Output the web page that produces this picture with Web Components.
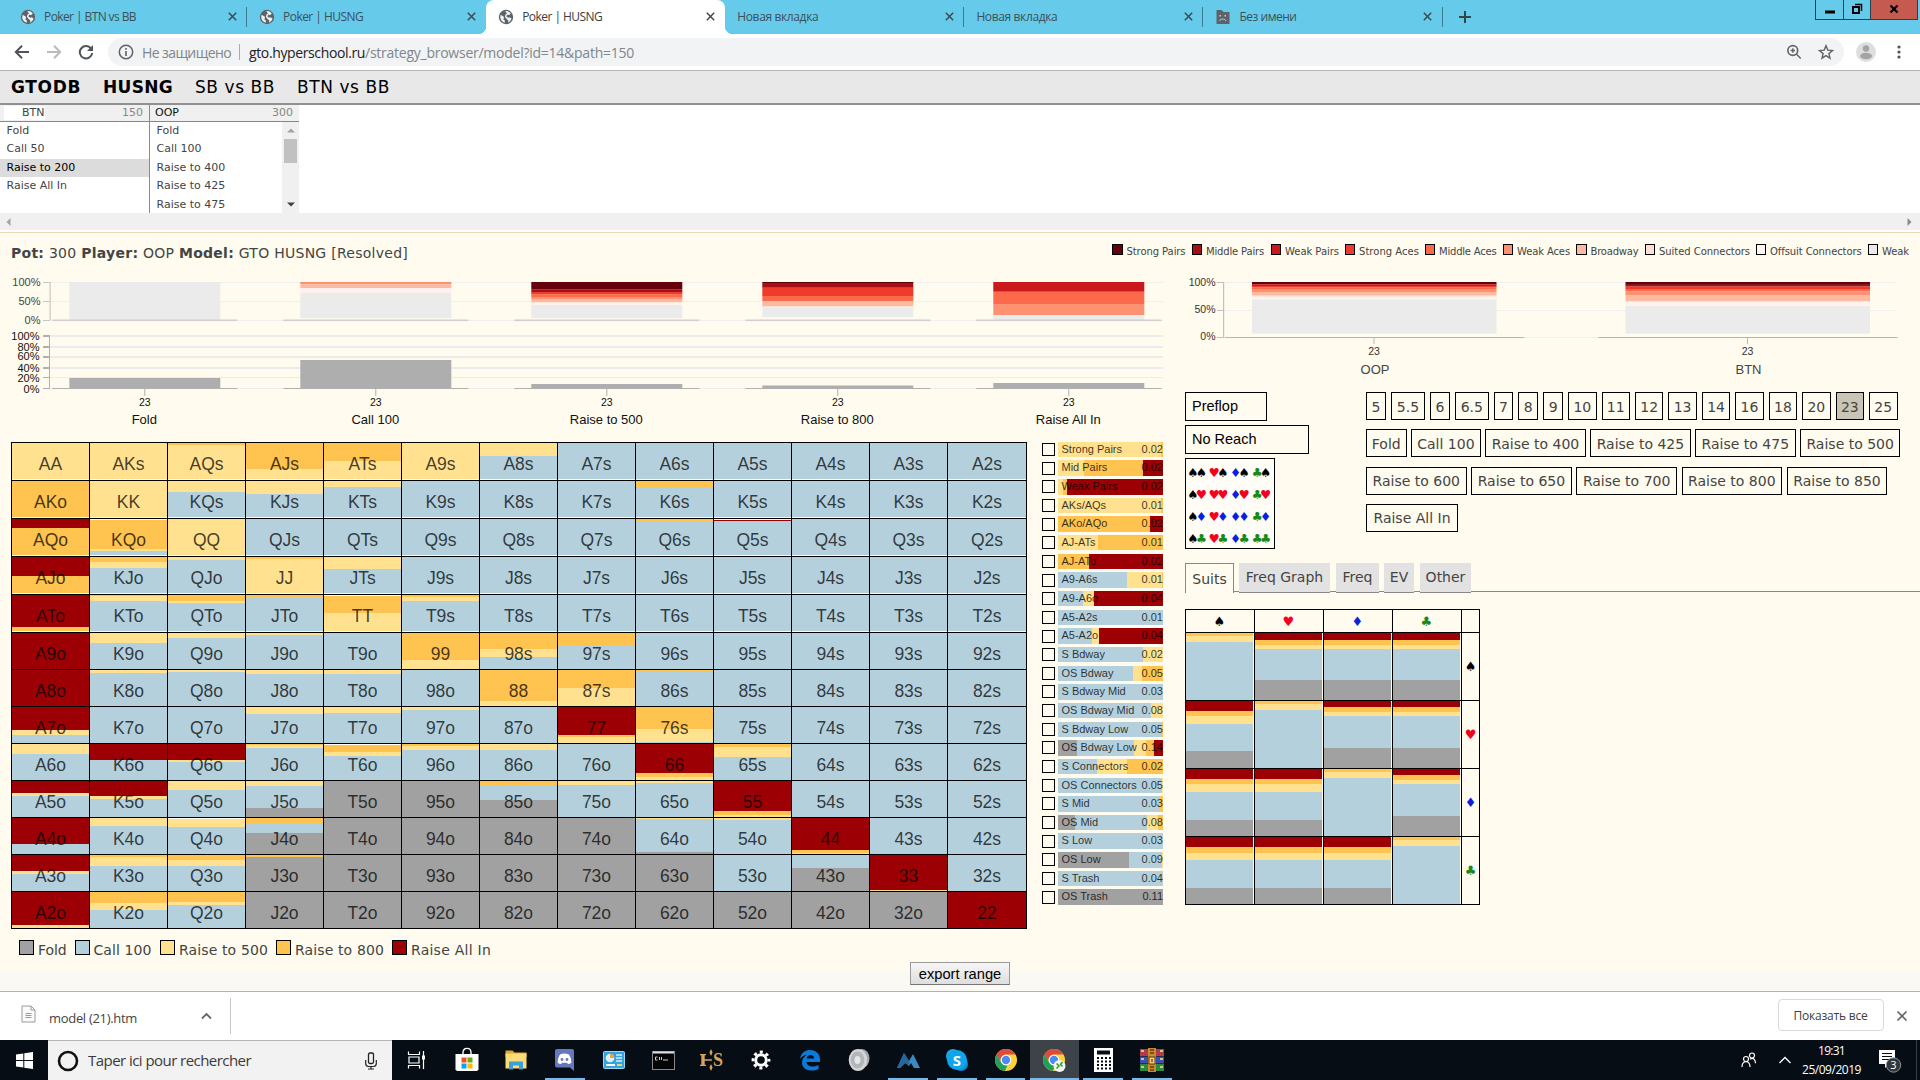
<!DOCTYPE html>
<html lang="ru">
<head>
<meta charset="utf-8">
<title>Poker | HUSNG</title>
<style>
html,body{margin:0;padding:0;width:1920px;height:1080px;overflow:hidden;background:#fff}
body{font-family:"DejaVu Sans",sans-serif;color:#444}
</style>
</head>
<body>
<app-shell></app-shell>
<script>
const define = (name, css, html) => {
  customElements.define(name, class extends HTMLElement {
    connectedCallback() {
      if (this.shadowRoot) return;
      const root = this.attachShadow({mode: 'open'});
      root.innerHTML = `<style>*{box-sizing:border-box}${css}</style>${typeof html === 'function' ? html(this) : html}`;
    }
  });
};
const UI = '"Open Sans","Noto Sans",sans-serif';
const ARIAL = '"Liberation Sans",Arial,sans-serif';
const COL = {r:'#9c0004', o:'#ffc34f', y:'#ffe18f', b:'#b4d0dd', g:'#a1a1a1', w:'#fffbee'};

/* Text set to an exact run width through letter-spacing */
customElements.define('fit-text', class extends HTMLElement {
  connectedCallback() {
    if (this.shadowRoot) return;
    this.attachShadow({mode: 'open'}).innerHTML = '<style>:host{display:inline-block;white-space:pre;flex:none}</style><slot></slot>';
    const w = +this.getAttribute('w');
    const n = this.textContent.length;
    if (w && n) {
      const d = (w - this.getBoundingClientRect().width) / n;
      this.style.letterSpacing = d.toFixed(3) + 'px';
      this.style.width = w + 'px';
    }
  }
});

/* ---------- browser chrome ---------- */
const globe = '<svg width="16" height="16" viewBox="0 0 16 16"><circle cx="8" cy="8" r="7.2" fill="#5f6368"/><path d="M6.200 9.200C6 7 4 7 2.600 5.800L2.200 8.500C2.600 11.500 4.500 13.200 6.800 13.700V11.500L5 10z" fill="#e8f4f8"/><path d="M7.300 2.200C9 1.800 11.500 2.600 12.800 4.600L11 6.200 9.500 5.500 8.300 7.300 9.700 8.600H12L13.500 9.500C13 11.500 11.500 13 10 13.500L10.400 11.400 8.600 9.900 6.900 7.700 7.500 5.600 9 4.500z" fill="#e8f4f8"/></svg>';
const sadTab = '<svg width="16" height="16" viewBox="0 0 16 16"><path d="M1.500 1h5l2 2h6v12h-13z" fill="#5f6368"/><path d="M4.500 6h1.500v1.500H4.500zM9.500 6H11v1.500H9.500z" fill="#9edbf0"/><path d="M4.500 12c1-2.600 5.500-2.600 6.500 0" fill="none" stroke="#9edbf0"/></svg>';
define('browser-tab', `
:host{display:flex;align-items:center;width:239.100px;height:34px;padding:0 9.500px 1px 12px;font:12px ${UI};color:#3d5058;position:relative}
:host([active]){background:#fff;border-radius:8px 8px 0 0;color:#3c4043}
:host([active])::before,:host([active])::after{content:"";position:absolute;bottom:0;width:8px;height:8px;background:radial-gradient(circle at 0 0,transparent 8px,#fff 8.500px)}
:host([active])::before{left:-8px}:host([active])::after{right:-8px;transform:scaleX(-1)}
:host([sep])::after{content:"";position:absolute;right:0;top:7px;width:1px;height:20px;background:#3d7b91}
.i{display:flex;margin-right:8px}.x{margin-left:auto}`,
h => `${h.getAttribute('icon') ? `<span class="i">${h.getAttribute('icon') === 'sad' ? sadTab : globe}</span>` : ''}<fit-text w="${h.getAttribute('w')}">${h.getAttribute('label')}</fit-text><svg class="x" width="11" height="11" viewBox="0 0 11 11"><path d="M1.800 1.800l7.400 7.400M9.200 1.800L1.800 9.200" stroke="#3c4a50" stroke-width="1.500"/></svg>`);

define('tab-strip', `
:host{display:flex;height:34px;background:#66cbeb;padding-left:8px}
.plus{margin:9px 0 0 14px}
.win{margin-left:auto;margin-right:2px;display:flex;height:20px;border:1px solid #2d3d44;border-top:0}
.win span{display:flex;align-items:center;justify-content:center;width:28px;border-right:1px solid #2d3d44;padding-bottom:1px}
.win span:nth-child(2){width:27px}
.win span:last-child{width:46px;border:0;background:#c45a50}`,
`<browser-tab sep icon="g" label="Poker | BTN vs BB" w="92"></browser-tab>
<browser-tab icon="g" label="Poker | HUSNG" w="80"></browser-tab>
<browser-tab active icon="g" label="Poker | HUSNG" w="80"></browser-tab>
<browser-tab sep label="Новая вкладка" w="81"></browser-tab>
<browser-tab sep label="Новая вкладка" w="81"></browser-tab>
<browser-tab sep icon="sad" label="Без имени" w="57"></browser-tab>
<svg class="plus" width="16" height="16"><path d="M8 2v12M2 8h12" stroke="#33444b" stroke-width="2"/></svg>
<div class="win"><span><svg width="12" height="12"><rect x="1" y="7.500" width="10" height="3"/></svg></span><span><svg width="12" height="12" viewBox="0 0 12 12"><path d="M4 1.500h6.500V8" fill="none" stroke="#000" stroke-width="1.500"/><rect x="2" y="4" width="6" height="6" fill="none" stroke="#000" stroke-width="2"/></svg></span><span><svg width="10" height="10"><path d="M1.500 1.500l7 7M8.500 1.500l-7 7" stroke="#000" stroke-width="2.200"/></svg></span></div>`);

define('address-bar', `
:host{display:flex;align-items:center;height:36px;background:#fff;padding:0 12px 0 14px;font:14px ${UI};color:#80868b}
.nav{display:flex;gap:16px;width:94px;align-items:center}
.box{display:flex;align-items:center;width:1736px;height:28px;border-radius:14px;background:#f1f3f4;padding:0 10px}
.sep{width:1px;height:16px;background:#a8acb0;margin:0 9px 0 8px}
.host{color:#202124}.tools{margin-left:auto;display:flex;gap:16px}
.i{margin-right:8px}.av{margin-left:12px}.dots{margin-left:20px}`,
`<div class="nav">
<svg width="16" height="16" viewBox="0 0 16 16"><path d="M15 8H2M8 1.700L1.800 8 8 14.300" fill="none" stroke="#50545a" stroke-width="2"/></svg>
<svg width="16" height="16" viewBox="0 0 16 16"><path d="M1 8h13M8 1.700L14.200 8 8 14.300" fill="none" stroke="#b9bbbe" stroke-width="2"/></svg>
<svg width="16" height="16" viewBox="0 0 16 16"><path d="M13.300 5A6.200 6.200 0 1 0 14.200 9" fill="none" stroke="#50545a" stroke-width="2"/><path d="M15 1v6H9z" fill="#50545a"/></svg></div>
<div class="box"><svg class="i" width="16" height="16" viewBox="0 0 16 16"><circle cx="8" cy="8" r="6.700" fill="none" stroke="#5f6368" stroke-width="1.500"/><path d="M8 7v5M8 4v1.700" stroke="#5f6368" stroke-width="1.600"/></svg>
<fit-text w="89">Не защищено</fit-text><span class="sep"></span><fit-text class="host" w="116">gto.hyperschool.ru</fit-text><fit-text w="269">/strategy_browser/model?id=14&amp;path=150</fit-text>
<span class="tools"><svg width="16" height="16" viewBox="0 0 16 16"><circle cx="6.800" cy="6.500" r="4.900" fill="none" stroke="#5f6368" stroke-width="1.600"/><path d="M10.300 10l4.400 4.500M4.600 6.500h4.400M6.800 4.300v4.400" stroke="#5f6368" stroke-width="1.400"/></svg>
<svg width="16" height="16" viewBox="0 0 16 16"><path d="M8 1.700l1.800 4.400 4.700.4-3.600 3.100 1.100 4.600L8 11.700l-4 2.500 1.100-4.600L1.500 6.500l4.700-.4z" fill="none" stroke="#5f6368" stroke-width="1.400"/></svg></span></div>
<svg class="av" width="20" height="20"><circle cx="10" cy="10" r="10" fill="#dedede"/><circle cx="10" cy="6.500" r="3.200" fill="#a4a4a4"/><ellipse cx="10" cy="14" rx="6" ry="3.300" fill="#a4a4a4"/></svg>
<svg class="dots" width="6" height="16"><circle cx="3" cy="3" r="1.600" fill="#50545a"/><circle cx="3" cy="8" r="1.600" fill="#50545a"/><circle cx="3" cy="13" r="1.600" fill="#50545a"/></svg>`);

/* ---------- page header ---------- */
define('site-nav', `
:host{display:flex;align-items:center;height:35px;background:#e8e8e8;border-top:1px solid #b5b5b5;border-bottom:2px solid #909090;padding:0 0 1px 11px;gap:22px;font-size:17px;color:#000}
b{display:flex}`,
`<b><fit-text w="70">GTODB</fit-text></b><b><fit-text w="70">HUSNG</fit-text></b><fit-text w="80">SB vs BB</fit-text><fit-text w="93">BTN vs BB</fit-text>`);

define('action-column', `
:host{display:block;width:149px;height:108px;font-size:11px;color:#444;overflow:hidden}
:host([ruled]){width:150px;border-right:1px solid #8a8a8a}
.h{display:flex;justify-content:space-between;align-items:center;height:17px;background:#f0f0f0;border-bottom:1px solid #888;padding:0 6px 1px 5px;color:#111}
.h i{font-style:normal;color:#888}
:host([ruled]) .h{padding-left:4px}
:host([ruled]) .h span{background:#fff;color:#444;padding-left:18px;line-height:14px}
.b{display:flex;height:91px}
.l{flex:1}
p{margin:0;height:18.400px;line-height:18.800px;padding-left:6.500px}
p[on]{background:#dcdcdc;color:#000}
.s{width:17px;background:#f0f0f0;padding:6px 2px;display:flex;flex-direction:column;align-items:center}
.s u{width:13px;height:24px;background:#c1c1c1;margin:6px 0 auto}`,
h => { const on = h.getAttribute('on');
 return `<div class="h"><span>${h.getAttribute('name')}</span><i>${h.getAttribute('pot')}</i></div><div class="b"><div class="l">${h.getAttribute('items').split(',').map(t => `<p ${t === on ? 'on' : ''}>${t}</p>`).join('')}</div>${h.hasAttribute('scroll') ? '<div class="s"><svg width="8" height="5"><path d="M0 4.500L4 0.500 8 4.500z" fill="#a3a3a3"/></svg><u></u><svg width="8" height="5"><path d="M0 .5L4 4.500 8 .5z" fill="#404040"/></svg></div>' : ''}</div>`; });

define('history-panel', `
:host{display:block;height:128px;background:#fff;border-bottom:1px solid #ead9b5}
.c{display:flex;height:108px}
.s{display:flex;justify-content:space-between;align-items:center;height:17px;background:#f0f0f0;padding:0 8px 0 6px}`,
`<div class="c"><action-column ruled name="BTN" pot="150" on="Raise to 200" items="Fold,Call 50,Raise to 200,Raise All In"></action-column>
<action-column scroll name="OOP" pot="300" items="Fold,Call 100,Raise to 400,Raise to 425,Raise to 475"></action-column></div>
<div class="s"><svg width="5" height="8"><path d="M4.500 0L.5 4l4 4z" fill="#a3a3a3"/></svg><svg width="5" height="8"><path d="M.5 0l4 4-4 4z" fill="#8a8a8a"/></svg></div>`);

/* ---------- summary ---------- */
const CAT = [['Strong Pairs','#67000d',59,6],['Middle Pairs','#a50f15',58,6.500],['Weak Pairs','#cb181d',54,5.500],['Strong Aces','#ef3b2c',60,5.500],['Middle Aces','#fb6a4a',57.500,6],['Weak Aces','#fc9272',53,6],['Broadway','#fcbba1',48,6],['Suited Connectors','#fee0d2',91,5.500],['Offsuit Connectors','#fff5f0',91.500,6],['Weak','#ebebeb',27,0]];
define('summary-bar', `
:host{display:flex;justify-content:space-between;height:39px;padding:0 11px;color:#444}
.t{font-size:14px;line-height:40px}
.l{display:flex;font-size:10px;padding-top:11px;line-height:15px}
.l i{width:10.500px;height:11px;border:1px solid #000;margin-right:4px}`,
`<div class="t"><fit-text w="397"><b>Pot:</b> 300 <b>Player:</b> OOP <b>Model:</b> GTO HUSNG [Resolved]</fit-text></div>
<div class="l">${CAT.map(c => `<i style="background:${c[1]}"></i><fit-text w="${c[2]}" style="margin-right:${c[3]}px">${c[0]}</fit-text>`).join('')}</div>`);

/* ---------- charts; y coordinates are relative to the chart top ---------- */
const rect = (x, y, w, h, f) => `<rect x="${x}" y="${y}" width="${w}" height="${h}" fill="${f}"/>`;
const label = (x, y, t, a, s, f) => `<text x="${x}" y="${y}" text-anchor="${a}" font-size="${s}" fill="${f || '#111'}">${t}</text>`;
const bands = (x, w, y0, list) => list.map(([f, y1]) => { const r = rect(x, y0, w, y1 - y0 + .1, f); y0 = y1; return r; }).join('');
const G = '#ebebeb', P = CAT.map(c => c[1]);
define('action-chart', `:host{display:block;height:170px}svg{display:block;font-family:${ARIAL}}`, () => {
  let s = '';
  [[10,1],[29,1],[48,1]].forEach(([y]) => s += rect(50, y, 1113, 1, '#efeff0'));
  [[63,2],[74,2],[84,2],[95,2],[105,1],[116,1]].forEach(([y, h]) => { s += rect(50, y, 1113, h, '#ececec'); s += rect(43, y, 7, h, '#b0b0b0'); });
  [['100%',14],['50%',33],['0%',51.500]].forEach(([t, y]) => s += label(40.500, y, t, 'end', 11, '#444'));
  [['100%',68],['80%',79],['60%',88],['40%',100],['20%',109.500],['0%',120.500]].forEach(([t, y]) => s += label(39.500, y, t, 'end', 11));
  [10,29,48].forEach(y => s += rect(43, y, 7, 1, '#c8c8c4'));
  s += rect(49.500, 10, 1.200, 38, '#c8c8c4') + rect(49, 63, 1, 54, '#b0b0b0');
  const stacks = [
    [[G,48]],
    [[P[5],12.300],[P[6],16],['#fff1ed',21],[G,46]],
    [[P[0],17.500],[P[1],20],[P[3],22.500],[P[4],25],[P[5],27],[P[6],30.500],['#fff1ed',33],[G,46]],
    [[P[0],11],[P[1],15.700],[P[3],24],[P[4],29],[P[6],34.500],['#f6efe9',36],[G,45]],
    [[P[2],19.700],[P[4],32],[P[5],43],[G,48]]];
  const tops = [106,88,112,113.500,111], names = ['Fold','Call 100','Raise to 500','Raise to 800','Raise All In'];
  stacks.forEach((b, i) => {
    const x = 69.300 + 231 * i;
    s += bands(x, 151, 10, b) + rect(x, tops[i], 151, 116 - tops[i], '#aeaeae');
    s += rect(x - 17, 47.500, 185, 1.600, '#d0d0cc') + rect(x - 17, 116, 185, 1, '#b0b0b0') + rect(x + 75, 117, 1, 7, '#b0b0b0');
    s += label(x + 75.500, 134, '23', 'middle', 10.500) + label(x + 75, 151.500, names[i], 'middle', 13);
  });
  return `<svg width="1175" height="170">${s}</svg>`;
});
define('reach-chart', `:host{display:block;height:120px}svg{display:block;font-family:${ARIAL}}`, () => {
  let s = '';
  [[10,'100%'],[38,'50%'],[65,'0%']].forEach(([y, t]) => s += rect(39, y, 673, 1, '#efeff0') + rect(32, y, 7, 1, '#c0c0bc') + label(30.500, y + (y > 20 ? 3 : 3.500), t, 'end', 10.500, '#333'));
  s += rect(38, 10, 1.200, 56, '#c0c0bc');
  [['OOP',67,[[P[0],12.300],[P[2],14],[P[3],15.500],[P[4],17],[P[5],20.500],[P[6],23.700],['#fee8de',25],[P[8],27.500],[G,61.500]]],
   ['BTN',440.500,[[P[0],12.800],[P[1],14.500],[P[3],17],[P[4],19.500],[P[5],23],[P[6],29.500],['#fff1ed',34],[G,61.500]]]].forEach(([n, x, b]) => {
    s += bands(x, 244.500, 10, b) + rect(x - 27, 65, 299, 1, '#b4b4b2') + rect(x + 121.500, 66, 1, 6, '#b8b8b4');
    s += label(x + 122, 83, '23', 'middle', 10.500, '#333') + label(x + 123, 101.700, n, 'middle', 13, '#444');
  });
  return `<svg width="735" height="120">${s}</svg>`;
});

/* ---------- range matrix ---------- */
const gradient = (spec, dir, unit) => {
  const parts = spec.match(/[a-z][\d.]*/g); let at = 0;
  return `linear-gradient(${dir},${parts.map(p => { const c = COL[p[0]], e = p.slice(1); const a = at; at = e || null; return e ? `${c} ${a}${unit},${c} ${e}${unit}` : `${c} ${a}${unit}`; }).join(',')}${parts.length === 1 ? `,${COL[parts[0][0]]}` : ''})`;
};
const RANGE = [
 'y y o2y o26y o18.5y y y13b b b b b b b',
 'o y y11b y13b y5.5b b b b o6.5b b b b b',
 'r9o w1o30.5y32.5b y b b b b b o3b w1r2b b b b',
 'r18.5o o4.5y11b y3b o2y y12b b b b b b b b b',
 'r31.5o o1y6b o6y8b o3b w1o18y o2y5.5b b b b b b b b',
 'r y10b y5b y2b b o27y o16y24b o12b b b b b b',
 'r y3b y2b y4b y4b b o31y o18.5y o2b b b b b',
 'r23y28b b b y7.5b y6.5b y3b b r28.5o30y o22y35b b b b b',
 'y9.5b r15.5y16b r15.5y18b o1y4b w1o7.5y12b o2y5.5b y5.5b b r29.5o33y o3y13b b b b',
 'r12y15b r15y18b y9b y5b27g g g o5.5b19g y4b y2b r30.5o34y b b b',
 'r26b y8b w1y9b o5.5b15.5g g g g g y1b34g y2b r32.5o35y b b',
 'r16.5y19.5b o2y11b o5y11b o2g g g g g g b b13g r35y b',
 'r33y o11y17.5b o10y13b g g g g g g g g g r'];
const RK = 'AKQJT98765432';
define('range-matrix', `
:host{display:grid;width:1016px;grid-template-columns:repeat(12,78px) 79px;grid-template-rows:repeat(5,38px) repeat(8,37px);border:solid #000;border-width:1px 0 0 1px;font:17.500px/37px ${ARIAL};background:#fffbee}
div{border:solid #000;border-width:0 1px 1px 0;background-repeat:no-repeat;text-align:center;color:rgba(0,0,0,.74);padding-top:3px;line-height:37px;overflow:hidden;background-size:100% 36px}
div:nth-child(13n){background-size:77px 36px}`,
() => RANGE.map((row, r) => row.split(' ').map((c, k) => `<div style="background-image:${gradient(c, '180deg', 'px')}">${r === k ? RK[r] + RK[r] : r < k ? RK[r] + RK[k] + 's' : RK[k] + RK[r] + 'o'}</div>`).join('')).join(''));

const GROUPS = [['Strong Pairs','0.02','y98o'],['Mid Pairs','0.02','y25o80.6r'],['Weak Pairs','0.02','y5o9r'],['AKs/AQs','0.01','y98.5o'],['AKo/AQo','0.02','o88r'],['AJ-ATs','0.01','y38o'],['AJ-ATo','0.02','o29.5r'],['A9-A6s','0.01','b65.5y99o'],['A9-A6o','0.04','b24y34r'],['A5-A2s','0.01','b'],['A5-A2o','0.04','b32y39r'],['S Bdway','0.02','b81y'],['OS Bdway','0.05','b71y80o'],['S Bdway Mid','0.03','b'],['OS Bdway Mid','0.08','b88.5y'],['S Bdway Low','0.05','b98o'],['OS Bdway Low','0.14','g18b72.5y84o91.5r'],['S Connectors','0.02','b37y65.5o'],['OS Connectors','0.05','b99y'],['S Mid','0.03','b96o'],['OS Mid','0.08','g16b85y95o'],['S Low','0.03','b'],['OS Low','0.09','g67.5b99y'],['S Trash','0.04','b'],['OS Trash','0.11','g']];
define('group-list', `
:host{display:block;width:121px;margin:-.4px 0 0 15px;font:11px/15px ${ARIAL}}
p{display:flex;align-items:center;justify-content:space-between;margin:0;height:18.660px;padding-bottom:3px}
i{width:13px;height:13px;border:1px solid #000}
span{display:flex;justify-content:space-between;width:105px;height:15.500px;padding:0 0 0 3.500px;color:rgba(0,0,0,.78)}
b{font-weight:400}`,
() => GROUPS.map(g => `<p><i></i><span style="background:${gradient(g[2], '90deg', '%')}"><b>${g[0]}</b><b>${g[1]}</b></span></p>`).join(''));

define('action-legend', `
:host{display:flex;padding:12px 0 0 19px;font-size:14px;line-height:18px}
i{width:15px;height:15px;border:1px solid #000;margin:-1px 4px 0 0}`,
() => [['Fold','g',28.500,8],['Call 100','b',58,8.500],['Raise to 500','y',89,8],['Raise to 800','o',89,8],['Raise All In','r',80,0]].map(a => `<i style="background:${COL[a[1]]}"></i><fit-text w="${a[2]}" style="margin-right:${a[3]}px">${a[0]}</fit-text>`).join(''));

/* ---------- controls ---------- */
const SUIT = [['♠','#000'],['♥','#f5001d'],['♦','#0a1fe0'],['♣','#178a17']];
const sp = k => `<b style="font-weight:400;color:${SUIT[k][1]}">${SUIT[k][0]}</b>`;
define('board-select', `
:host{display:block;width:181px;font:14.500px/27px ${ARIAL};color:#000}
.f{border:1px solid #000;height:29px;padding-left:6px;margin-bottom:4px}
.f+.f{line-height:26px}
.g{display:grid;grid-template-columns:repeat(4,21.400px);grid-template-rows:repeat(4,22px);justify-content:center;width:90px;height:91px;border:1px solid #000;background:#fffdf6;padding-top:2.500px;font:12.500px/22px "DejaVu Sans",sans-serif;letter-spacing:-2.700px}`,
() => `<div class="f" style="width:82px">Preflop</div><div class="f" style="width:124px">No Reach</div><div class="g">${[0,1,2,3].map(r => [0,1,2,3].map(c => `<span>${sp(c)}${sp(r)}</span>`).join('')).join('')}</div>`);

define('choice-row', `
:host{display:flex;gap:5px;font-size:14px;color:#444;height:28px;margin-bottom:9.300px}
span{border:1px solid #000;display:flex;align-items:center;justify-content:center;flex:none;padding-top:1px}
span[on]{background:#c8c5b7}`,
h => h.getAttribute('items').split(',').map(t => { const [a, w] = t.split(':'); return `<span style="width:${w}px" ${a === '23' ? 'on' : ''}>${a}</span>`; }).join(''));

define('detail-tabs', `
:host{display:flex;height:30px;font-size:14px;color:#444;align-items:flex-start}
span{height:30px;background:#e2e2e2;border-bottom:1px solid #888;display:flex;align-items:center;justify-content:center;padding-bottom:2px;flex:none}
span[on]{background:#fffbee;border:1px solid #888;border-bottom:0;padding:0}
i{height:29px;border-bottom:1px solid #888;width:5px}i:last-child{flex:1}`,
`<span on style="width:49px">Suits</span><i></i><span style="width:91px">Freq Graph</span><i style="width:6px"></i><span style="width:43px">Freq</span><i></i><span style="width:30px">EV</span><i style="width:6px"></i><span style="width:51px">Other</span><i></i>`);

const DG = 'o3y9b', UP = 'r6.5o11.5y15.5b47g', LO = 'r10o15.5y23b50.5g';
define('suit-table', `
:host{display:grid;width:295px;margin-top:16px;grid-template-columns:repeat(4,69px) 18px;grid-template-rows:23px repeat(4,68px);border:solid #000;border-width:1px 0 0 1px;font:13px/16px "DejaVu Sans",sans-serif}
div{border:solid #000;border-width:0 1px 1px 0;display:flex;align-items:center;justify-content:center;background-size:67px 100%;background-repeat:no-repeat}
.h{padding:2px 1.500px 0 0}.v{padding-top:1px}`,
() => [0,1,2,3].map(k => `<div class="h">${sp(k)}</div>`).join('') + '<div></div>' +
 [0,1,2,3].map(r => [0,1,2,3].map(c => `<div style="background-image:${gradient(r === c ? DG : c > r ? UP : LO, '180deg', 'px')}"></div>`).join('') + `<div class="v">${sp(r)}</div>`).join(''));

define('strategy-page', `
:host{display:flex;flex-direction:column;height:758px;background:linear-gradient(#fffbee 738.500px,#faf9f3 738.500px);overflow:hidden}
.m{display:flex;height:724px;flex:none}.l{width:1185px}.r{flex:1}
.row{display:flex;height:487px}
.ctl{display:flex;height:171px}
.choices{flex:1}
button{display:block;width:100px;height:23px;margin:-34px auto 0;border:1px solid #9a9a9a;border-bottom-color:#777;border-radius:0;background:linear-gradient(#f6f6f6,#dedede);font:14.700px/20px ${ARIAL};padding:0;color:#000;flex:none}`,
`<summary-bar></summary-bar>
<div class="m"><div class="l"><action-chart></action-chart><div class="row" style="padding-left:11px"><range-matrix></range-matrix><group-list></group-list></div><action-legend></action-legend></div>
<div class="r"><reach-chart></reach-chart>
<div class="ctl"><board-select></board-select><div class="choices">
<choice-row style="gap:4.950px" items="5:20,5.5:34,6:20,6.5:34,7:19.5,8:20,9:20,10:28.5,11:28.5,12:28.5,13:28.5,14:28.5,16:28.5,18:28.5,20:28.5,23:28.5,25:28.5"></choice-row>
<choice-row style="gap:4.400px" items="Fold:40.5,Call 100:70,Raise to 400:100.5,Raise to 425:100.5,Raise to 475:100.5,Raise to 500:100.5"></choice-row>
<choice-row style="gap:4.700px" items="Raise to 600:100.5,Raise to 650:100.5,Raise to 700:100.5,Raise to 800:100.5,Raise to 850:100.5"></choice-row>
<choice-row items="Raise All In:92"></choice-row></div></div>
<detail-tabs></detail-tabs><suit-table></suit-table></div></div>
<button>export range</button>`);

/* ---------- downloads ---------- */
define('download-bar', `
:host{display:flex;align-items:center;height:49px;border-top:1px solid #b2b2b2;background:#fff;padding:0 12px 0 21px;font:13px ${UI};color:#444}
.f{display:flex;align-items:center;width:210px;height:36px;border-right:1px solid #c8c8c8;padding-right:18px}
.f svg:first-child{margin:-4px 13px 0 0}.f fit-text{padding-top:4px}.f svg:last-child{margin-left:auto}
.b{margin:-2px 12.500px 0 auto;width:106px;height:32px;border:1px solid #d8dadd;border-radius:4px;display:flex;align-items:center;justify-content:center;font-size:12px;color:#3c4043}`,
`<div class="f"><svg width="15" height="18" viewBox="0 0 15 18"><path d="M1 1h9l4 4v12H1z" fill="#fafafa" stroke="#9a9a9a"/><path d="M10 1v4h4" fill="none" stroke="#9a9a9a"/><path d="M4.500 8.500h6M4.500 10.500h6M4.500 12.500h6" stroke="#999"/></svg><fit-text w="88">model (21).htm</fit-text><svg width="11" height="8"><path d="M1 6.500l4.500-4.500L10 6.500" fill="none" stroke="#666" stroke-width="1.800"/></svg></div>
<div class="b"><fit-text w="74">Показать все</fit-text></div><svg width="12" height="12"><path d="M1.500 1.500l9 9M10.500 1.500l-9 9" stroke="#666" stroke-width="1.700"/></svg>`);

/* ---------- taskbar ---------- */
const chrome = (extra = '') => `<svg width="24" height="24" viewBox="0 0 24 24"><circle cx="12" cy="12" r="11" fill="#fdd23c"/><path d="M2.500 6.500A11 11 0 0 1 21.600 6.600H12A5.500 5.500 0 0 0 7 14.500z" fill="#dc4b3e"/><path d="M2.500 6.500L7.300 14.800A5.500 5.500 0 0 0 13.500 17.300L10.800 23A11 11 0 0 1 2.500 6.500z" fill="#22a05b"/><circle cx="12" cy="12" r="5.300" fill="#fff"/><circle cx="12" cy="12" r="4.200" fill="#4a8af4"/>${extra}</svg>`;
const ICONS = {
 view: '<svg width="20" height="20" viewBox="0 0 20 20" fill="none" stroke="#fff" stroke-width="1.200"><path d="M1.500 1.500v3h11v-3M1.500 18.500v-3h11v3M2 7h10v6H2zM16.500 1v18"/><path d="M15 5.500h3v4h-3z" fill="#fff" stroke="none"/></svg>',
 store: '<svg width="24" height="26" viewBox="0 0 24 26"><path d="M8 8V5.500C8 0 16 0 16 5.500V8" fill="none" stroke="#fff" stroke-width="1.400"/><path d="M.5 7h23v15.500L22 24H2L.5 22.500z" fill="#fff"/><path d="M6.500 10.500h5v5h-5z" fill="#f25022"/><path d="M12.500 10.500h5v5h-5z" fill="#6aa80f"/><path d="M6.500 16.500h5v5h-5z" fill="#00a4ef"/><path d="M12.500 16.500h5v5h-5z" fill="#ffb900"/></svg>',
 folder: '<svg width="24" height="22" viewBox="0 0 24 22"><path d="M1.500 1.500h7l2 2h12V8h-21z" fill="#e3a82b"/><path d="M1.500 4.500h21v15h-21z" fill="#fbdc77"/><path d="M5 20.500V12.500h14v8h-4V16.500H9v4z" fill="#3a9fdc"/></svg>',
 discord: '<svg width="22" height="24" viewBox="0 0 22 24"><path d="M3 1h15q2 0 2 2v20l-4-3.500H3q-2 0-2-2V3q0-2 2-2z" fill="#6577bd"/><path d="M6 6.500q4.500-2 9 0Q17.500 10 17.500 14.500q-1.500 1.500-3.500 1.500l-1-1.300H8.200L7 16q-2 0-3.500-1.500Q3.500 10 6 6.500z" fill="#fff"/><circle cx="8" cy="11.500" r="1.400" fill="#6577bd"/><circle cx="13" cy="11.500" r="1.400" fill="#6577bd"/></svg>',
 panel: '<svg width="22" height="18" viewBox="0 0 22 18"><rect x=".5" y=".5" width="21" height="17" rx="1" fill="#35a3e0" stroke="#9bd8f5"/><circle cx="7" cy="7" r="4.300" fill="#def1fb"/><path d="M7 7V2.700A4.300 4.300 0 0 1 11.300 7z" fill="#f2a33c"/><path d="M13 4h6M13 7h6M13 10h6" stroke="#d5eefa" stroke-width="1.500"/><path d="M3 14h9" stroke="#fff" stroke-width="2"/><path d="M14 14h5" stroke="#e9da55" stroke-width="2"/></svg>',
 cmd: '<svg width="23" height="19" viewBox="0 0 23 19"><rect x=".5" y=".5" width="22" height="18" fill="#050505" stroke="#888"/><path d="M1 1.500h21" stroke="#ddd" stroke-width="2"/><path d="M5.500 6H3.500v3h2M7.500 6v3M9.500 6v3M11 9h5" stroke="#ccc" fill="none"/></svg>',
 hs: '<svg width="24" height="22" viewBox="0 0 24 22"><path d="M0 5h6v1.200H4.700v9.600H6V17H0v-1.200h1.300V6.200H0zM4.700 10.300h5.500v1.400H4.700z" fill="#d6a25c"/><text x="13" y="17.300" font-family="Liberation Serif" font-weight="700" font-size="18" fill="#d6a25c">S</text><path d="M11 0l1.600 3.500L11 7 9.400 3.500zM11 15l1.600 3.500L11 22l-1.600-3.500zM11 9.500l1 1.500-1 1.500-1-1.500z" fill="#d6a25c"/></svg>',
 gear: '<svg width="20" height="20" viewBox="0 0 20 20"><g fill="none" stroke="#fff"><circle cx="10" cy="10" r="5.300" stroke-width="3"/><circle cx="10" cy="10" r="8" stroke-width="2.800" stroke-dasharray="3.100 3.183" stroke-dashoffset="1.500"/></g></svg>',
 edge: '<svg width="22" height="22" viewBox="0 0 22 22"><path d="M1 10C2 3.500 6.500 1 11 1c6 0 10 4 10 9v3H7.500c.3 3 3 4.500 6 4.500 2.500 0 4.500-.7 6-1.500v4c-2 1-4.500 1.500-7 1.500C6.500 21.500 3 18 3 13.500 3 10 5 7.500 8 6 4.500 6 2.500 8 1 10zM7.800 9.500h7.400C15 7 13.500 6 11.500 6S8 7.500 7.800 9.500z" fill="#0b7ad9"/></svg>',
 speaker: '<svg width="22" height="24" viewBox="0 0 22 24"><ellipse cx="14" cy="10.500" rx="7.500" ry="9.500" fill="#a3a7aa"/><ellipse cx="10" cy="12" rx="9.300" ry="11" fill="#d3d5d7"/><ellipse cx="9.500" cy="12" rx="6.800" ry="8.500" fill="#b2b6b9"/><ellipse cx="9.500" cy="12" rx="3" ry="4" fill="#e4e6e7"/></svg>',
 mount: '<svg width="24" height="18" viewBox="0 0 24 18"><path d="M1 17L8 2l5 8 4-7 7 14h-6l-3-5-2 3-4-3-5 5z" fill="#3b8ac4"/><path d="M8 2l5 8 .500 5-4.500-3-5 5H1z" fill="#27669a"/></svg>',
 skype: '<svg width="24" height="24" viewBox="0 0 24 24"><circle cx="8" cy="8" r="7" fill="#1aa7ea"/><circle cx="16" cy="16" r="7" fill="#0a8bd6"/><circle cx="12" cy="12" r="10" fill="#0fa5ea"/><text x="12" y="17.500" text-anchor="middle" font-family="Open Sans" font-weight="700" font-size="15" fill="#fff">S</text></svg>',
 chrome: chrome(),
 chrome2: chrome('<circle cx="17.500" cy="18" r="6" fill="#f2f5f2"/><path d="M14.500 15.500l2.500 2.500-2.500 2.500M20.500 14l-2 2.500 2 2" fill="none" stroke="#34a235" stroke-width="1.600"/>'),
 calc: '<svg width="19" height="24" viewBox="0 0 19 24"><rect width="19" height="24" fill="#fff"/><path d="M3 2.500h13v4H3z" fill="#060d14"/><path d="M3 10h2M7 10h2M11 10h2M15 10h2M3 13.500h2M7 13.500h2M11 13.500h2M15 13.500h2M3 17h2M7 17h2M11 17h2M15 17h2M3 20.500h2M7 20.500h2M11 20.500h2M15 20.500h2" stroke="#060d14" stroke-width="1.800"/></svg>',
 rar: '<svg width="24" height="24" viewBox="0 0 24 24"><path d="M0 1h24v7H0z" fill="#b23b4a"/><path d="M0 8.500h24v7H0z" fill="#3d4fb0"/><path d="M0 16h24v7H0z" fill="#2c8a3c"/><path d="M1 3h3M20 3h3M1 11h3M20 11h3M1 19h3M20 19h3" stroke="#d9c27a" stroke-width="2"/><path d="M8 0h8v24H8z" fill="#c8892f"/><path d="M9 9h6v7H9z" fill="#f3d275" stroke="#5c3310"/><path d="M10 2h4M10 5h4M12 11v3M10 19h4M10 22h4" stroke="#6a3a12" stroke-width="1.300"/></svg>'};
define('task-icon', `
:host{display:flex;align-items:center;justify-content:center;width:48.930px;height:40px;position:relative}
:host([run])::after{content:"";position:absolute;left:4.500px;right:4.500px;bottom:0;height:2px;background:#76b9ed}
:host([on]){background:#3d4349}:host([on])::after{left:0;right:0}`, h => ICONS[h.getAttribute('icon')]);

define('task-bar', `
:host{display:flex;height:40px;background:#060d14;font-family:${UI};color:#fff}
.st{width:48px;display:flex;align-items:center;justify-content:center}
.se{width:344px;background:#f2f2f2;border-top:1px solid #b5b5b5;display:flex;align-items:center;padding:0 14px 0 9px;font-size:15px;color:#3a3a3a}
.se svg:first-child{margin:0 9px 0 0}.se svg:last-child{margin-left:auto}
.se fit-text{padding-bottom:2px}
.ic{display:flex;padding-left:2px}
.tr{margin-left:auto;display:flex;align-items:center}
.ck{font-size:12px;line-height:19px;text-align:center;width:60px;margin:0 16.500px 0 9.500px;padding-bottom:1px}
.sep{width:4px;height:40px;border-left:1px solid #3a4046;margin-left:14px}`,
`<div class="st"><svg width="17" height="17" viewBox="0 0 17 17"><path d="M0 2.400L7.300 1.400V8H0zM8.300 1.200L17 0v8H8.300zM0 9h7.300v6.600L0 14.600zM8.300 9H17v8l-8.700-1.200z" fill="#fff"/></svg></div>
<div class="se"><svg width="22" height="22"><circle cx="11" cy="11" r="9" fill="none" stroke="#111" stroke-width="2.600"/></svg><fit-text w="163">Taper ici pour rechercher</fit-text><svg width="14" height="18" viewBox="0 0 14 18"><rect x="4.500" y="1" width="5" height="10.500" rx="1.500" fill="none" stroke="#222" stroke-width="1.300"/><path d="M1.700 8v3.500q0 3 3 3h4.600q3 0 3-3V8M7 14.500V17M4 17h6" fill="none" stroke="#222" stroke-width="1.200"/></svg></div>
<div class="ic"><task-icon style="margin:0 1.500px 0 -1.500px" icon="view"></task-icon><task-icon icon="store"></task-icon><task-icon icon="folder"></task-icon><task-icon run icon="discord"></task-icon><task-icon icon="panel"></task-icon><task-icon icon="cmd"></task-icon><task-icon icon="hs"></task-icon><task-icon icon="gear"></task-icon><task-icon icon="edge"></task-icon><task-icon icon="speaker"></task-icon><task-icon run icon="mount"></task-icon><task-icon run icon="skype"></task-icon><task-icon run icon="chrome"></task-icon><task-icon run on icon="chrome2"></task-icon><task-icon run icon="calc"></task-icon><task-icon run icon="rar"></task-icon></div>
<div class="tr"><svg width="16" height="16" viewBox="0 0 16 16" fill="none" stroke="#fff" stroke-width="1.200"><circle cx="5" cy="7" r="2.500"/><path d="M1 15c0-7 8-7 8 0"/><circle cx="11" cy="3.500" r="2.500"/><path d="M9 7.200c3-2 5.500 0 5.500 4"/></svg>
<svg style="margin-left:21px" width="14" height="8"><path d="M1.500 7L7 1.500 12.500 7" fill="none" stroke="#fff" stroke-width="1.300"/></svg>
<div class="ck"><fit-text w="27">19:31</fit-text><br><fit-text w="59">25/09/2019</fit-text></div>
<svg width="24" height="26" viewBox="0 0 24 26"><path d="M1 3h16v14h-6l-4 4v-4H1z" fill="#fff"/><path d="M4 6.500h10M4 9.500h10M4 12.500h10" stroke="#060d14" stroke-width="1.200"/><circle cx="15.500" cy="18" r="7.200" fill="#30373d" stroke="#8d9296"/><text x="15.500" y="22" text-anchor="middle" font-family="Open Sans" font-size="11" fill="#fff">3</text></svg><span class="sep"></span></div>`);

define('app-shell', ':host{display:flex;flex-direction:column;width:1920px;height:1080px}',
`<tab-strip></tab-strip><address-bar></address-bar><site-nav></site-nav><history-panel></history-panel><strategy-page></strategy-page><download-bar></download-bar><task-bar></task-bar>`);
</script>
</body>
</html>
